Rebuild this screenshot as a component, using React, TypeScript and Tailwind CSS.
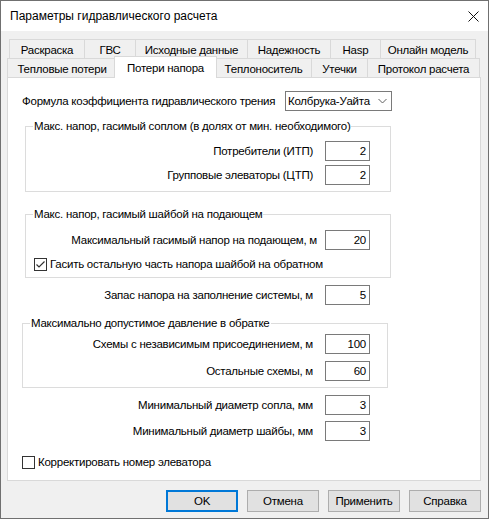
import React from 'react';

const font = "font-['Liberation_Sans',Arial,sans-serif]";

const Tab = ({ label, w, active }: { label: string; w: string; active?: boolean }) => {
	if (active) {
		return (
			<div
				className={`${w} relative z-10 -mx-[2px] -mb-px flex h-[22px] items-start justify-center border-x border-t border-[#d9d9d9] bg-white pt-[3px]`}
			>
				{label}
			</div>
		);
	}
	return (
		<div
			className={`${w} flex h-[19px] items-center justify-center border-t border-l border-[#d9d9d9] bg-[#f0f0f0] pt-[2px] last:border-r`}
		>
			{label}
		</div>
	);
};

const NumInput = ({ value }: { value: string }) => (
	<div className="flex h-[20px] w-[45px] items-center justify-end border border-[#7a7a7a] bg-white pr-[3px]">
		{value}
	</div>
);

const Field = ({ label, value, gap = 'gap-[12px]' }: { label: string; value: string; gap?: string }) => (
	<div className={`flex items-center justify-end ${gap}`}>
		<span>{label}</span>
		<NumInput value={value} />
	</div>
);

const CheckBox = ({ checked }: { checked?: boolean }) => (
	<div className="flex h-[13px] w-[13px] items-center justify-center border border-[#333333] bg-white">
		{checked && (
			<svg width="11" height="11" viewBox="0 0 11 11">
				<path d="M1.5 5.5 L4 8 L9.5 2.5" fill="none" stroke="#333333" strokeWidth="1.2" />
			</svg>
		)}
	</div>
);

const Button = ({ label, primary }: { label: string; primary?: boolean }) => (
	<div
		className={`flex h-[22px] w-[72px] items-center justify-center bg-[#e1e1e1] ${
			primary ? 'border-2 border-[#0078d7]' : 'border border-[#adadad]'
		}`}
	>
		{label}
	</div>
);

export default function App() {
	return (
		<div
			className={`${font} flex h-[519px] w-[489px] flex-col overflow-hidden border border-[#707070] bg-[#f0f0f0] text-[11.5px] leading-[16px] tracking-[-0.25px] whitespace-nowrap text-black`}
		>
			{/* title bar */}
			<div className="flex h-[30px] items-center justify-between bg-white pr-[9px] pl-[9px]">
				<span className="text-[12px] tracking-normal">Параметры гидравлического расчета</span>
				<svg width="11" height="11" viewBox="0 0 11 11">
					<path d="M0.5 0.5 L10.5 10.5 M10.5 0.5 L0.5 10.5" stroke="#111111" strokeWidth="1" />
				</svg>
			</div>

			<div className="flex flex-col pr-[7px] pl-[6px]">
				{/* tabs */}
				<div className="mt-[8px] ml-[2px] flex">
					<Tab label="Раскраска" w="w-[75px]" />
					<Tab label="ГВС" w="w-[51px]" />
					<Tab label="Исходные данные" w="w-[112px]" />
					<Tab label="Надежность" w="w-[83px]" />
					<Tab label="Hasp" w="w-[50px]" />
					<Tab label="Онлайн модель" w="w-[96px]" />
				</div>
				<div className="flex h-[19px] items-end">
					<Tab label="Тепловые потери" w="w-[109px]" />
					<Tab label="Потери напора" w="w-[103px]" active />
					<Tab label="Теплоноситель" w="w-[96px]" />
					<Tab label="Утечки" w="w-[56px]" />
					<Tab label="Протокол расчета" w="w-[113px] border-r" />
				</div>

				{/* page */}
				<div className="flex h-[404px] flex-col border border-[#d9d9d9] bg-white">
					<div className="mt-[13px] ml-[14px] flex items-center">
						<span className="w-[263px]">Формула коэффициента гидравлического трения</span>
						<div className="flex h-[20px] w-[107px] items-center justify-between border border-[#7a7a7a] bg-white pr-[4px] pl-[2px]">
							<span>Колбрука-Уайта</span>
							<svg width="9" height="6" viewBox="0 0 9 6">
								<path d="M0.5 1 L4.5 5 L8.5 1" fill="none" stroke="#606060" strokeWidth="1" />
							</svg>
						</div>
					</div>

					<fieldset className="mt-[7px] ml-[17px] flex w-[366px] flex-col gap-[4px] border border-[#dcdcdc] pt-[7px] pr-[20px] pb-[6px] pl-[7px]">
						<legend className="px-[1px]">Макс. напор, гасимый соплом (в долях от мин. необходимого)</legend>
						<Field label="Потребители (ИТП)" value="2" />
						<Field label="Групповые элеваторы (ЦТП)" value="2" />
					</fieldset>

					<fieldset className="mt-[14px] ml-[17px] flex w-[366px] flex-col border border-[#dcdcdc] pt-[8px] pr-[20px] pb-[5px] pl-[8px]">
						<legend className="-ml-px px-[1px]">Макс. напор, гасимый шайбой на подающем</legend>
						<Field label="Максимальный гасимый напор на подающем, м" value="20" gap="gap-[8px]" />
						<div className="mt-[6px] flex items-center gap-[3px]">
							<CheckBox checked />
							<span>Гасить остальную часть напора шайбой на обратном</span>
						</div>
					</fieldset>

					<div className="mt-[7px] mr-[110px]">
						<Field label="Запас напора на заполнение системы, м" value="5" />
					</div>

					<fieldset className="mt-[10px] ml-[14px] flex w-[366px] flex-col gap-[7px] border border-[#dcdcdc] pt-[3px] pr-[17px] pb-[6px] pl-[7px]">
						<legend className="px-[1px]">Максимально допустимое давление в обратке</legend>
						<Field label="Схемы с независимым присоединением, м" value="100" />
						<Field label="Остальные схемы, м" value="60" />
					</fieldset>

					<div className="mt-[7px] mr-[110px] flex flex-col gap-[6px]">
						<Field label="Минимальный диаметр сопла, мм" value="3" />
						<Field label="Минимальный диаметр шайбы, мм" value="3" />
					</div>

					<div className="mt-[13px] ml-[14px] flex items-center gap-[3px]">
						<CheckBox />
						<span>Корректировать номер элеватора</span>
					</div>
				</div>

				{/* buttons */}
				<div className="mt-[9px] flex justify-end gap-[9px]">
					<Button label="OK" primary />
					<Button label="Отмена" />
					<Button label="Применить" />
					<Button label="Справка" />
				</div>
			</div>
		</div>
	);
}
